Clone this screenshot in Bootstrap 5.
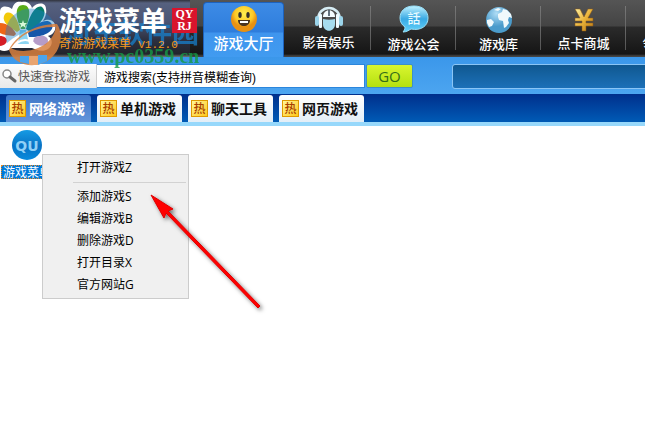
<!DOCTYPE html>
<html lang="zh-CN">
<head>
<meta charset="utf-8">
<meta name="viewport" content="width=device-width, initial-scale=1">
<title>游戏菜单</title>
<link href="https://cdn.jsdelivr.net/npm/bootstrap@5.3.0/dist/css/bootstrap.min.css" rel="stylesheet">
<style>
body{font:12px/16px "Liberation Sans","Noto Sans CJK SC",sans-serif;color:#000;background:#fff;min-height:100vh}
button,input{font:inherit}
.topbar{height:57px;background:linear-gradient(#555 0,#444 26px,#2b2b2b 27px,#151515 54px,#444 56px)}
.brandbox{width:203px;height:57px}
.brandpanel{width:190px;height:57px;background:linear-gradient(#30333c 0,#56617f 3px,#4a5474 22px,#2c3040 40px,#22242c 54px,#777 57px)}
.brandtext{padding-left:59px;padding-top:4px;z-index:2}
.brandname{font:bold 27px/32px "Noto Sans CJK SC",sans-serif;color:#fff}
.version{color:#f79a1c;font-family:"Liberation Mono","Noto Sans CJK SC",monospace;font-size:12px;line-height:18px}
.version small{font-size:11px}
.seal{width:25px;height:25px;background:#d8142c;color:#fff;font:bold 12px/12px "Liberation Serif",serif;margin:4px 0 0 5px}
.flower{left:0;top:0}
.wm{left:0;top:0;pointer-events:none}
.wmname{left:64px;top:17px;font:bold 27px/30px "Noto Sans CJK SC",sans-serif;color:#1685d4;opacity:.7;z-index:1}
.wmsite{left:67px;top:45px;font:bold 20px/22px "Liberation Serif",serif;color:#169a45;opacity:.8}
.navitem{width:85px;height:57px;padding-top:5px;color:#fff;font:500 13px/18px "Noto Sans CJK SC",sans-serif;text-decoration:none;background:linear-gradient(#777,#555) right 6px/1px 44px no-repeat}
.navitem svg{margin-bottom:2px}
.navitem.current{width:81px;padding-top:0;margin-top:2px;margin-right:2px;height:55px;font-size:15px;background:linear-gradient(#3d8be6 0,#2e7ddc 29px,#3f95ee 30px,#419bf0);border:1px solid #1d62bd;border-bottom:0;border-radius:4px 4px 0 0}
.navitem.current svg{margin-top:2px;margin-bottom:1px}
.toolbar{height:37px;background:linear-gradient(#3b97ea,#4ca5f0);padding:7px 0 5px}
.searchlabel{width:97px;height:24px;background:linear-gradient(#fdfdfd,#e9e9e9);color:#555;border-right:1px solid #ccc;font-family:"Noto Sans CJK SC",sans-serif}
.searchbox{width:268px;height:24px;border:1px solid #2b86dc;border-left:0;border-radius:0;padding:0 7px;background:#fff}
.gobtn{width:47px;height:24px;margin-left:1px;border:1px solid #3c8fc8;border-radius:2px;background:linear-gradient(#d9f62f,#b4e010);color:#356e18;font:15px/20px "Open Sans",sans-serif}
.notice{height:25px;margin-left:39px;margin-right:-4px;border:1px solid #8bc5f5;border-radius:3px;background:linear-gradient(#105890,#1c70b8)}
.tabbar{height:32px;padding:1px 6px 0;gap:6px;background:linear-gradient(#002f8c,#0059b4 27px,#0059b4);border-bottom:4px solid #97d8fb}
.tabbtn{width:85px;height:27px;padding:0 0 2px 3px;gap:3px;border:0;border-radius:3px 3px 0 0;background:linear-gradient(#fff,#e3eef7);font:bold 14px/20px "Noto Sans CJK SC",sans-serif;color:#111}
.tabbtn.current{background:linear-gradient(#3e77c8,#6395db);color:#fff}
.hot{width:17px;height:17px;margin-top:2px;background:linear-gradient(135deg,#fff59a,#ffc91c);border:1px solid #e09a00;color:#a83e00;font:500 12px/14px "Noto Sans CJK SC",sans-serif}
.desk{padding:4px 0 0 1px}
.gameicon{width:52px;border:0;padding:0;background:none}
.gameicon span{height:14px;line-height:13px;background:#0078d7;color:#fff;outline:1px dotted #e38b2a;outline-offset:-1px;margin-top:4px;font-family:"Noto Sans CJK SC",sans-serif}
.ctx{left:42px;top:154px;width:147px;background:#f0f0f0;border:1px solid #ccc;padding:2px}
.ctx button{height:22px;padding:0 0 0 32px;border:0;background:none;font:12px/22px "Open Sans","Noto Sans CJK SC",sans-serif;text-align:left}
.ctx hr{margin:3px 0 3px 28px;border-top:1px solid #d2d2d2}
.pointer{left:140px;top:185px;pointer-events:none}
</style>
<script src="https://cdn.jsdelivr.net/npm/bootstrap@5.3.0/dist/js/bootstrap.bundle.min.js"></script>
</head>
<body class="position-relative overflow-hidden">
<header class="topbar d-flex overflow-hidden">
  <div class="brandbox flex-shrink-0">
    <div class="brandpanel position-relative">
      <svg class="flower position-absolute" width="64" height="57" viewBox="0 0 64 57">
        <path d="M0 12C0 6 6 5 12 9 14 2 18 1 22 2 27 1 31 4 32 8 37 2 46 2 46 9 47 13 45 18 43 21 51 17 57 23 55 30 53 34 51 35 48 36 53 39 53 45 48 49 42 53 35 49 32 48L12 48C8 51 4 52 0 50Z" fill="#fff"/>
        <path d="M23 5c8 0 8 11 2 24h-4C15 16 15 5 23 5Z" fill="#58ad18"/>
        <path d="M5 14c5-5 13 3 15 16l-3 2C6 25 1 20 5 14Z" fill="#f2c90a"/>
        <path d="M42 7c7 6-2 19-13 24l-3-2C29 16 36 4 42 7Z" fill="#087d6a"/>
        <path d="M51 23c6 7-7 15-22 14l-1-4C36 23 47 18 51 23Z" fill="#1556a9"/>
        <path d="M0 23c8 0 14 6 16 11l-2 2C8 35 3 35 0 33Z" fill="#ee6517"/>
        <path d="M0 36c9 0 9 9 0 10Z" fill="#d51d25"/>
        <path d="M34 38c7-4 14-2 14 3 0 6-10 6-15 1Z" fill="#b69cc8"/>
        <path d="M20 30h6l3 14H18Z" fill="#8dd5f2"/>
      </svg>
      <div class="brandtext position-relative">
        <div class="d-flex"><div class="brandname text-nowrap">游戏菜单</div><div class="seal text-center flex-shrink-0">QY<br>RJ</div></div>
        <div class="version text-nowrap">奇游游戏菜单 <small>V1.2.0</small></div>
      </div>
    </div>
  </div>
  <nav class="d-flex flex-shrink-0" aria-label="主导航">
    <a href="#" class="navitem current d-flex flex-column align-items-center" aria-current="page">
      <svg width="28" height="28" viewBox="0 0 28 28"><defs><radialGradient id="y" cy=".3"><stop stop-color="#fff04f"/><stop offset=".7" stop-color="#fdc927"/><stop offset="1" stop-color="#e89112"/></radialGradient></defs><circle cx="14" cy="14" r="13" fill="url(#y)"/><ellipse cx="10" cy="10" rx="1.7" ry="3" fill="#35302a"/><ellipse cx="18" cy="10" rx="1.7" ry="3" fill="#35302a"/><path d="M8 15h12c0 8-12 8-12 0Z" fill="#4a3420"/><path d="M10 16h8v2h-8Z" fill="#fff"/></svg>游戏大厅</a>
    <a href="#" class="navitem d-flex flex-column align-items-center">
      <svg width="30" height="26" viewBox="0 0 30 26"><path d="M4 15C4-1 26-1 26 15" fill="none" stroke="#d7edf5" stroke-width="2.5"/><rect x="1" y="11" width="4" height="10" rx="2" fill="#9bd4ea"/><rect x="25" y="11" width="4" height="10" rx="2" fill="#9bd4ea"/><rect x="5" y="9" width="3" height="14" rx="1" fill="#eefaff"/><rect x="22" y="9" width="3" height="14" rx="1" fill="#eefaff"/><path d="M9 12C9 3 21 3 21 12Z" fill="#f3fbff"/><path d="M9 14c4 1 8 1 12 0v5c0 9-12 9-12 0Z" fill="#a6dcef"/><path d="M15 5v6" stroke="#345" stroke-width="1.5"/></svg>影音娱乐</a>
    <a href="#" class="navitem d-flex flex-column align-items-center">
      <svg width="32" height="28" viewBox="0 0 32 28"><defs><linearGradient id="b" x2="0" y2="1"><stop stop-color="#bff1ff"/><stop offset=".5" stop-color="#38a9e4"/><stop offset="1" stop-color="#65d3fa"/></linearGradient></defs><path d="M16 1C7 1 2 6 2 13c0 4 2 7 5 9 0 2-1 4-2 5 4 0 6-2 8-3 10 2 17-3 17-11C30 6 25 1 16 1Z" fill="url(#b)" stroke="#99e1fa"/><text x="16" y="18" font-size="13" text-anchor="middle" fill="#e8fbff" font-family="Noto Sans CJK TC,sans-serif">話</text></svg>游戏公会</a>
    <a href="#" class="navitem d-flex flex-column align-items-center">
      <svg width="28" height="28" viewBox="0 0 28 28"><defs><radialGradient id="g" cx=".4" cy=".25"><stop stop-color="#afddf6"/><stop offset="1" stop-color="#4a9bcb"/></radialGradient></defs><circle cx="14" cy="15" r="13" fill="url(#g)"/><path d="M13 9l4-2 1-3 4 1 4 4 1 4-3-1-1 3 1 3-3 4-2 1-1-7-4-1-1-3Zm-11 6 4-1 3 3-2 4-3 1-2-4ZM9 5l4-2 3 1-3 2Z" fill="#f0f9fc"/></svg>游戏库</a>
    <a href="#" class="navitem d-flex flex-column align-items-center">
      <svg width="22" height="27" viewBox="0 0 22 27"><defs><linearGradient id="m" x2="1" y2="1"><stop stop-color="#fff2a2"/><stop offset=".5" stop-color="#e9b33a"/><stop offset="1" stop-color="#b87614"/></linearGradient></defs><path d="M2 4h5l4 8 4-8h5l-5 9h5v3h-7v2h7v3h-7v5H9v-5H2v-3h7v-2H2v-3h5Z" fill="url(#m)" stroke="#8a5716" stroke-width=".5"/></svg>点卡商城</a>
    <a href="#" class="navitem d-flex flex-column align-items-center"><svg width="28" height="27" aria-hidden="true"></svg>领取礼包</a>
  </nav>
</header>
<form class="toolbar d-flex" onsubmit="return false">
  <label for="q" class="searchlabel d-flex align-items-center flex-shrink-0"><svg class="flex-shrink-0" width="18" height="16" viewBox="0 0 18 16"><circle cx="7" cy="6" r="4" fill="#fff" stroke="#888" stroke-width="1.5"/><path d="m10 9 5 4" stroke="#666" stroke-width="3" stroke-linecap="round"/></svg>快速查找游戏</label>
  <input id="q" class="searchbox flex-shrink-0" type="text" value="游戏搜索(支持拼音模糊查询)">
  <button class="gobtn p-0 flex-shrink-0" type="submit">GO</button>
  <div class="notice flex-grow-1"></div>
</form>
<div class="tabbar d-flex" role="tablist">
  <button type="button" role="tab" aria-selected="true" class="tabbtn current d-flex align-items-center"><span class="hot">热</span>网络游戏</button>
  <button type="button" role="tab" class="tabbtn d-flex align-items-center"><span class="hot">热</span>单机游戏</button>
  <button type="button" role="tab" class="tabbtn d-flex align-items-center"><span class="hot">热</span>聊天工具</button>
  <button type="button" role="tab" class="tabbtn d-flex align-items-center"><span class="hot">热</span>网页游戏</button>
</div>
<main class="desk">
  <button type="button" class="gameicon d-flex flex-column align-items-center">
    <svg width="32" height="31" viewBox="0 0 32 31"><defs><linearGradient id="q1" x2="0" y2="1"><stop stop-color="#169be4"/><stop offset=".55" stop-color="#0872c4"/><stop offset="1" stop-color="#0a8bdd"/></linearGradient></defs><circle cx="16" cy="15" r="15" fill="url(#q1)"/><text x="16" y="21" text-anchor="middle" font-size="14" font-weight="bold" fill="#8fd0f7" font-family="DejaVu Sans,sans-serif">QU</text></svg>
    <span class="w-100">游戏菜单</span>
  </button>
</main>
<svg class="wm position-absolute" width="64" height="66" viewBox="0 0 64 66">
  <path d="M7 43A25 25 0 0 1 55 25C39 26 21 31 7 43Z" fill="#1b80c8" opacity=".42"/>
  <path d="M23 20l1 3h3l-2 2 1 3-3-2-3 2 1-3-2-2h3Z" fill="#d8f8d8"/>
  <path fill-rule="evenodd" d="M9 50C16 34 37 24 57 24 64 34 61 50 50 59 36 70 14 66 9 50ZM11 48C22 55 52 50 56 27 38 26 20 34 11 48Z" fill="#d8803e" opacity=".85"/>
  <path d="M20 56h9v8l-9-2Zm18-1h9v6l-9 4Z" fill="#4ba4ed"/><path d="M29 56h9v9h-9Z" fill="#e9a46f"/>
  <path d="M17 43q8-6 17 0" fill="none" stroke="#fff" stroke-width="2"/>
</svg>
<span class="wmname position-absolute text-nowrap">河东软件园</span>
<span class="wmsite position-absolute text-nowrap">www.pc0359.cn</span>
<div class="ctx position-absolute d-flex flex-column" role="menu">
  <button type="button" role="menuitem">打开游戏Z</button>
  <hr class="opacity-100">
  <button type="button" role="menuitem">添加游戏S</button>
  <button type="button" role="menuitem">编辑游戏B</button>
  <button type="button" role="menuitem">删除游戏D</button>
  <button type="button" role="menuitem">打开目录X</button>
  <button type="button" role="menuitem">官方网站G</button>
</div>
<svg class="pointer position-absolute" width="130" height="132" viewBox="0 0 130 132"><defs><filter id="s" x="-20%" y="-20%" width="140%" height="140%"><feDropShadow dx="2" dy="2" stdDeviation="2" flood-opacity=".55"/></filter></defs><path d="M11 10 33 24 28 26 120 121 118 123 26 28 24 33Z" fill="#f00" stroke="#d00" stroke-width="1" filter="url(#s)"/></svg>
</body>
</html>
